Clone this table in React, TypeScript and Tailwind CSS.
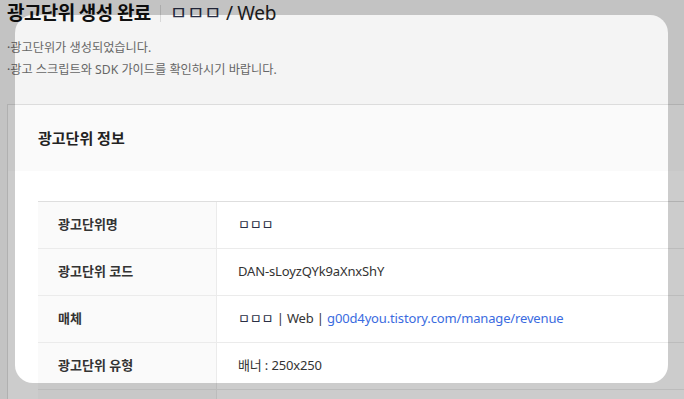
import React from 'react';

const font = { fontFamily: '"Noto Sans", "Noto Sans CJK KR", sans-serif' };

interface InfoRow {
  label: string;
  value: React.ReactNode;
}

const rows: InfoRow[] = [
  { label: '광고단위명', value: <span className="text-[#2a2f45]">ㅁㅁㅁ</span> },
  { label: '광고단위 코드', value: 'DAN-sLoyzQYk9aXnxShY' },
  {
    label: '매체',
    value: (
      <>
        <span className="text-[#2a2f45]">ㅁㅁㅁ</span>
        {' | Web | '}
        <span className="text-[#3a6be0]">g00d4you.tistory.com/manage/revenue</span>
      </>
    ),
  },
  { label: '광고단위 유형', value: '배너 : 250x250' },
  { label: '', value: '' },
];

export default function App() {
  return (
    <div className="relative w-[684px] h-[399px] overflow-hidden bg-[#f4f4f4] text-[#333]" style={font}>
      <div className="pl-[7px]">
        <div className="flex items-center h-[26px] pt-[1px]">
          <h1 className="text-[19px] font-bold text-[#111] leading-none tracking-[-0.6px]">광고단위 생성 완료</h1>
          <span className="ml-[9px] mr-[9px] w-px h-[17px] bg-[#d8d8d8]" />
          <span className="text-[19px] text-[#222] leading-none tracking-[-0.3px]">
            <span className="text-[#2a2f45]">ㅁㅁㅁ</span> / Web
          </span>
        </div>
        <ul className="mt-[11px] text-[12.2px] text-[#666] leading-[22px]">
          <li>·광고단위가 생성되었습니다.</li>
          <li>·광고 스크립트와 SDK 가이드를 확인하시기 바랍니다.</li>
        </ul>

        <div className="mt-[23px] border-t border-l border-[#dcdcdc] bg-white">
          <div className="h-[66px] bg-[#fafafa] flex items-center pl-[30px]">
            <h2 className="text-[15px] font-bold text-[#222]">광고단위 정보</h2>
          </div>
          <div className="pt-[30px] pl-[30px]">
            <div className="border-t border-[#dedede]">
              {rows.map((row, i) => (
                <div key={i} className="flex h-[47px] border-b border-[#ebebeb] text-[13px]">
                  <div className="w-[179px] shrink-0 bg-[#fafafa] border-r border-[#ebebeb] flex items-center pl-[20px] font-bold text-[#333]">
                    {row.label}
                  </div>
                  <div className="flex items-center pl-[21px] text-[#333] tracking-[-0.15px]">
                    <span>{row.value}</span>
                  </div>
                </div>
              ))}
            </div>
          </div>
        </div>
      </div>

      {/* spotlight overlay */}
      <div className="pointer-events-none absolute left-[15px] top-[15px] w-[653px] h-[368px] rounded-[18px] shadow-[0_0_0_2000px_rgba(0,0,0,0.2)]" />
    </div>
  );
}
